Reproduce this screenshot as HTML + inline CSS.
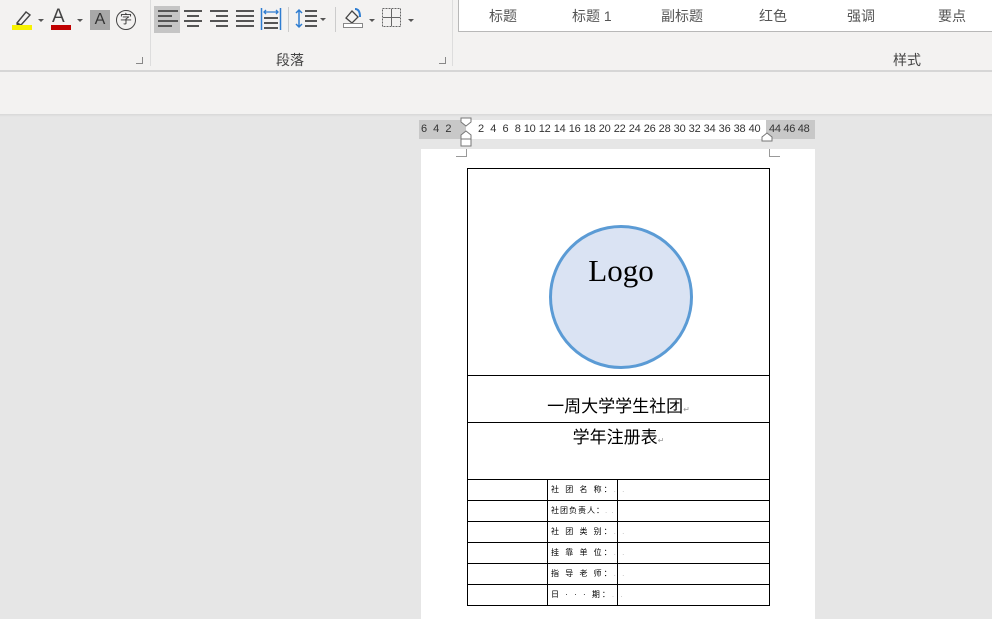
<!DOCTYPE html>
<html><head><meta charset="utf-8"><style>
*{margin:0;padding:0;box-sizing:border-box}
body{width:992px;height:614px;overflow:hidden;background:#e6e6e6;position:relative;font-family:"Liberation Sans","Noto Sans CJK SC",sans-serif}
.a{position:absolute}
.cjk{font-family:"Liberation Sans","Noto Sans CJK SC",sans-serif}
.rib{left:0;top:0;width:992px;height:70px;background:#f3f2f1}
.line{left:0;top:70px;width:992px;height:2px;background:#d6d6d6}
.tb{left:0;top:72px;width:992px;height:42px;background:#f3f2f1}
.sh{left:0;top:114px;width:992px;height:3px;background:linear-gradient(#d8d8d8,#e6e6e6)}
.lbl{font-size:14px;color:#444}
.sty{left:458px;top:-1px;width:540px;height:33px;background:#fff;border:1px solid #b8b8b8}
.sty span{position:absolute;top:6px;font-size:14px;color:#555}
.ln{background:#555;height:2px;position:absolute}
.ruler{top:120px;height:19px;font-size:11px;color:#333;line-height:19px;white-space:nowrap}
.h{position:absolute;height:1px;background:#000}
.v{position:absolute;width:1px;background:#000}
.lab{position:absolute;left:551px;font-size:8px;white-space:nowrap;line-height:10px;color:#000}
.dl{position:absolute;width:7px;height:7px;border-right:1px solid #888;border-bottom:1px solid #888}
</style></head><body>
<div class="a rib"></div>
<div class="a line"></div>
<div class="a tb"></div>
<div class="a sh"></div>
<svg class="a" style="left:12px;top:8px" width="22" height="22"><path d="M5 15 L14 4 L18 7 L9 17 Z" fill="none" stroke="#444" stroke-width="1.4"/><path d="M5 15 L4 18 L9 17" fill="#444"/></svg>
<div class="a" style="left:12px;top:25px;width:20px;height:5px;background:#f7f200"></div>
<div class="a" style="left:38px;top:19px;border:3px solid transparent;border-top:3px solid #555"></div>
<div class="a" style="left:52px;top:7px;font-size:19px;color:#444;line-height:20px">A</div>
<div class="a" style="left:51px;top:25px;width:20px;height:5px;background:#c00000"></div>
<div class="a" style="left:77px;top:19px;border:3px solid transparent;border-top:3px solid #555"></div>
<div class="a" style="left:90px;top:10px;width:20px;height:20px;background:#a8a8a8;font-size:16px;color:#333;text-align:center;line-height:20px">A</div>
<div class="a cjk" style="left:116px;top:10px;width:20px;height:20px;border:1.5px solid #444;border-radius:50%;font-size:12px;text-align:center;line-height:17px;color:#333">字</div>
<div class="dl" style="left:136px;top:57px"></div>
<div class="a" style="left:150px;top:0;width:1px;height:66px;background:#ddd"></div>
<div class="a" style="left:154px;top:6px;width:26px;height:27px;background:#c5c5c5"></div>
<div class="a" style="left:158px;top:9px;width:20px;height:20px">
<div class="ln" style="top:1px;width:20px"></div><div class="ln" style="top:6px;width:14px"></div><div class="ln" style="top:11px;width:20px"></div><div class="ln" style="top:16px;width:14px"></div></div>
<div class="a" style="left:184px;top:9px;width:20px;height:20px">
<div class="ln" style="top:1px;width:18px"></div><div class="ln" style="top:6px;left:3px;width:12px"></div><div class="ln" style="top:11px;width:18px"></div><div class="ln" style="top:16px;left:3px;width:12px"></div></div>
<div class="a" style="left:210px;top:9px;width:20px;height:20px">
<div class="ln" style="top:1px;width:18px"></div><div class="ln" style="top:6px;left:6px;width:12px"></div><div class="ln" style="top:11px;width:18px"></div><div class="ln" style="top:16px;left:6px;width:12px"></div></div>
<div class="a" style="left:236px;top:9px;width:20px;height:20px">
<div class="ln" style="top:1px;width:18px"></div><div class="ln" style="top:6px;width:18px"></div><div class="ln" style="top:11px;width:18px"></div><div class="ln" style="top:16px;width:18px"></div></div>
<svg class="a" style="left:260px;top:7px" width="22" height="24"><path d="M1.5 1v22M20.5 1v22" stroke="#2e7dd1" stroke-width="1.5"/><path d="M4 5h14M6 3l-2 2 2 2M16 3l2 2-2 2" stroke="#2e7dd1" fill="none" stroke-width="1.3"/><path d="M4 11h14M4 16h14M4 21h14" stroke="#555" stroke-width="2"/></svg>
<div class="a" style="left:288px;top:7px;width:1px;height:25px;background:#ccc"></div>
<svg class="a" style="left:295px;top:8px" width="34" height="22"><path d="M4 2v17M1 5l3-3 3 3M1 16l3 3 3-3" stroke="#2e7dd1" fill="none" stroke-width="1.5"/><path d="M10 3h12M10 8h12M10 13h12M10 18h12" stroke="#555" stroke-width="2"/><path d="M25 10h6l-3 3z" fill="#555"/></svg>
<div class="a" style="left:335px;top:7px;width:1px;height:25px;background:#ccc"></div>
<svg class="a" style="left:342px;top:6px" width="36" height="24"><path d="M4 12 L10 5 L16 11 L10 17 Z" fill="none" stroke="#444" stroke-width="1.3"/><path d="M13 3c4 0 5 4 5 8" stroke="#2e7dd1" fill="none" stroke-width="2"/><rect x="1.5" y="17.5" width="19" height="4" fill="#fff" stroke="#888"/><path d="M27 13h6l-3 3z" fill="#555"/></svg>
<svg class="a" style="left:381px;top:7px" width="36" height="22"><rect x="1.5" y="1.5" width="18" height="18" fill="none" stroke="#666" stroke-dasharray="2 1"/><path d="M10.5 2v17M2 10.5h17" stroke="#666"/><path d="M27 12h6l-3 3z" fill="#555"/></svg>
<div class="a lbl cjk" style="left:276px;top:50px">段落</div>
<div class="dl" style="left:439px;top:57px"></div>
<div class="a" style="left:452px;top:0;width:1px;height:66px;background:#ddd"></div>
<div class="a sty cjk">
<span style="left:30px">标题</span><span style="left:113px">标题 1</span><span style="left:202px">副标题</span><span style="left:300px">红色</span><span style="left:388px">强调</span><span style="left:479px">要点</span></div>
<div class="a lbl cjk" style="left:893px;top:50px">样式</div>
<div class="a" style="left:419px;top:120px;width:396px;height:19px;background:#c8c8c8"></div>
<div class="a" style="left:466px;top:120px;width:300px;height:19px;background:#fff"></div>
<div class="a ruler" style="left:421px;word-spacing:3px">6 4 2</div>
<div class="a ruler" style="left:478px;letter-spacing:-0.2px;word-spacing:0.3px">2&nbsp;&nbsp;4&nbsp;&nbsp;6&nbsp;&nbsp;8 10 12 14 16 18 20 22 24 26 28 30 32 34 36 38 40</div>
<div class="a ruler" style="left:769px;letter-spacing:-0.3px">44 46 48</div>
<svg class="a" style="left:459px;top:116px" width="14" height="34"><path d="M2 2h10v4l-5 4-5-4z M2 23v-4l5-4 5 4v4z" fill="#fff" stroke="#777"/><rect x="2" y="23" width="10" height="7" fill="#fff" stroke="#777"/></svg>
<svg class="a" style="left:760px;top:130px" width="14" height="12"><path d="M2 11v-4l5-4 5 4v4z" fill="#fff" stroke="#777"/></svg>
<div class="a" style="left:421px;top:149px;width:394px;height:470px;background:#fff"></div>
<div class="a" style="left:456px;top:149px;width:11px;height:8px;border-right:1px solid #999;border-bottom:1px solid #999"></div>
<div class="a" style="left:769px;top:149px;width:11px;height:8px;border-left:1px solid #999;border-bottom:1px solid #999"></div>
<div class="h" style="left:467px;width:303px;top:168px"></div>
<div class="h" style="left:467px;width:303px;top:375px"></div>
<div class="h" style="left:467px;width:303px;top:422px"></div>
<div class="h" style="left:467px;width:303px;top:479px"></div>
<div class="h" style="left:467px;width:303px;top:500px"></div>
<div class="h" style="left:467px;width:303px;top:521px"></div>
<div class="h" style="left:467px;width:303px;top:542px"></div>
<div class="h" style="left:467px;width:303px;top:563px"></div>
<div class="h" style="left:467px;width:303px;top:584px"></div>
<div class="h" style="left:467px;width:303px;top:605px"></div>
<div class="v" style="left:467px;top:168px;height:438px"></div>
<div class="v" style="left:769px;top:168px;height:438px"></div>
<div class="v" style="left:547px;top:479px;height:127px"></div>
<div class="v" style="left:617px;top:479px;height:127px"></div>
<div class="a cjk" style="left:467px;top:396px;width:303px;text-align:center;font-size:17px;line-height:22px">一周大学学生社团<span style="font-size:8px;color:#999">↵</span></div>
<div class="a cjk" style="left:467px;top:427px;width:303px;text-align:center;font-size:17px;line-height:22px">学年注册表<span style="font-size:8px;color:#999">↵</span></div>
<div class="lab cjk" style="top:485px;letter-spacing:2px">社 团 名 称：<span style="color:#bbb">. .</span></div>
<div class="lab cjk" style="top:506px;letter-spacing:1px">社团负责人：<span style="color:#bbb">. .</span></div>
<div class="lab cjk" style="top:527px;letter-spacing:2px">社 团 类 别：<span style="color:#bbb">. .</span></div>
<div class="lab cjk" style="top:548px;letter-spacing:2px">挂 靠 单 位：<span style="color:#bbb">. .</span></div>
<div class="lab cjk" style="top:569px;letter-spacing:2px">指 导 老 师：<span style="color:#bbb">. .</span></div>
<div class="lab cjk" style="top:590px;letter-spacing:2px">日 · · · 期：<span style="color:#bbb">. .</span></div>
<svg class="a" style="left:548px;top:224px" width="146" height="146"><circle cx="73" cy="73" r="70.5" fill="#dae3f3" stroke="#5b9bd5" stroke-width="3"/><text x="73" y="57" text-anchor="middle" font-family="Liberation Serif,serif" font-size="31" fill="#000">Logo</text></svg>
</body></html>
